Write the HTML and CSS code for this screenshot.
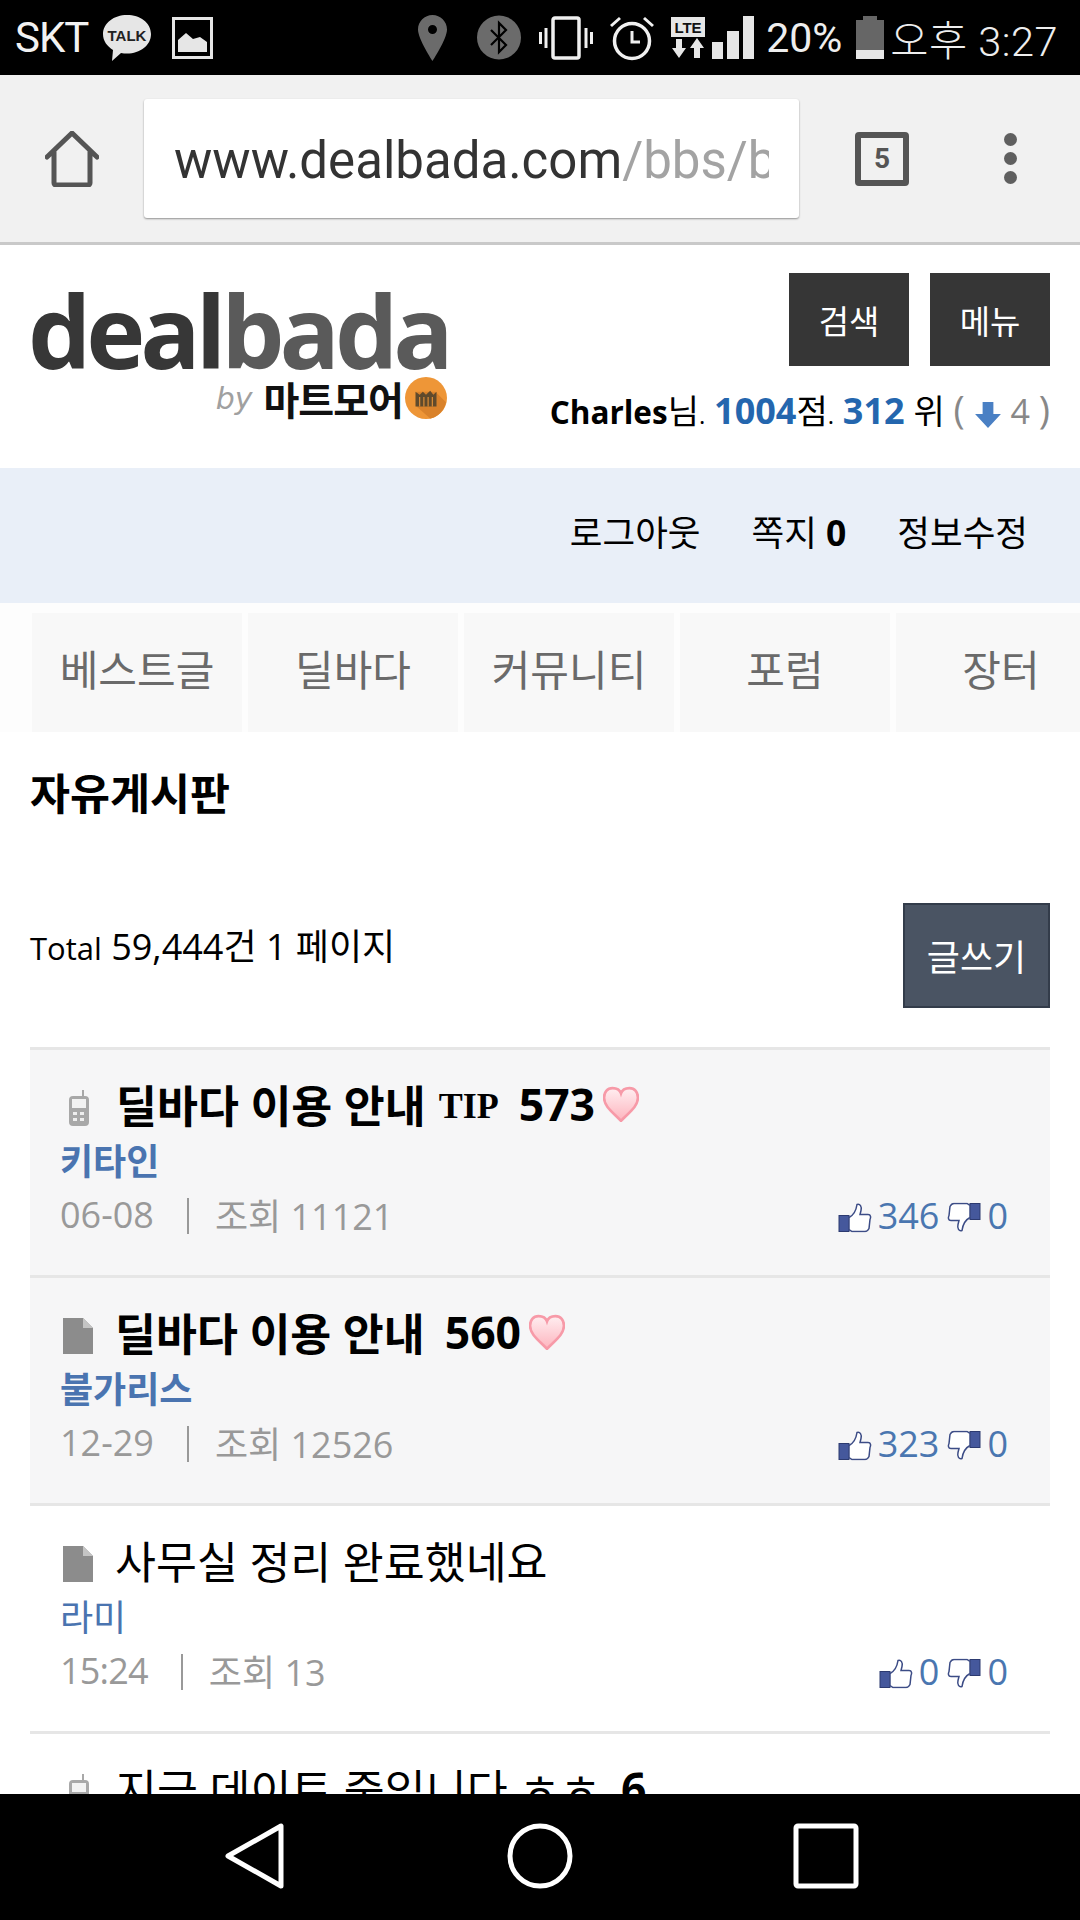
FILE: index.html
```html
<!DOCTYPE html>
<html lang="ko">
<head>
    <meta charset="UTF-8">
    <meta name="viewport" content="width=device-width, initial-scale=1.0">
    <title>dealbada</title>
    <link rel="stylesheet" href="styles.css">
</head>
<body>

    <div id="phone">

        <!-- Android status bar -->
        <div class="statusbar">
            <div class="status-left">
                <span class="carrier">SKT</span>
                <svg class="ic-talk" viewBox="0 0 50 48"><path d="M25 1C12 1 1 9 1 20c0 7 4 12 10 16l-1 11 9-8c2 .4 4 .5 6 .5 13 0 24-8 24-19.500S38 1 25 1z" fill="#e6e6e6"/><text x="25" y="27" text-anchor="middle" class="talk-text">TALK</text></svg>
                <svg class="ic-photo" viewBox="0 0 41 42"><path d="M1.500 1.500h38v39h-38z" fill="none" stroke="#e6e6e6" stroke-width="3"/><path d="M6 35V23l8-7 7 6 7-2 7 5v10z" fill="#e6e6e6"/></svg>
            </div>
            <div class="status-right">
                <svg class="ic-pin" viewBox="0 0 29 46"><path fill-rule="evenodd" d="M14.500 0C6.500 0 0 6.500 0 14.500 0 24 14.500 46 14.500 46S29 24 29 14.500C29 6.500 22.500 0 14.500 0zm0 10a4.500 4.500 0 1 1 0 9 4.500 4.500 0 0 1 0-9z" fill="#6b6b6b"/></svg>
                <svg class="ic-bt" viewBox="0 0 44 45"><circle cx="22" cy="22.500" r="22" fill="#6b6b6b"/><path d="M14 15l15 15-7 7V8l7 7-15 15" fill="none" stroke="#000" stroke-width="2.200"/></svg>
                <svg class="ic-vibrate" viewBox="0 0 54 44"><rect x="14" y="2" width="26" height="40" rx="2" fill="none" stroke="#f0f0f0" stroke-width="3.500"/><path d="M7 12v20M1.500 16v12M47 12v20M52.500 16v12" stroke="#f0f0f0" stroke-width="3"/></svg>
                <svg class="ic-alarm" viewBox="0 0 46 46"><circle cx="23" cy="26" r="17.500" fill="none" stroke="#f0f0f0" stroke-width="3.500"/><path d="M23 16v11h8M2 11l9-8M44 11l-9-8" fill="none" stroke="#f0f0f0" stroke-width="3"/></svg>
                <svg class="ic-lte" viewBox="0 0 34 42"><rect x="0" y="0" width="34" height="20" fill="#e6e6e6"/><text x="17" y="16" text-anchor="middle" class="lte-text">LTE</text><path d="M5 22h6v9h4l-7 10-7-10h4zM23 41h6v-10h4l-7-10-7 10h4z" fill="#e6e6e6"/></svg>
                <div class="signal"><i class="s1"></i><i class="s2"></i><i class="s3"></i></div>
                <span class="battery-pct">20%</span>
                <div class="battery"><i></i></div>
                <span class="clock">오후 3:27</span>
            </div>
        </div>

        <!-- browser toolbar -->
        <div class="toolbar">
            <svg class="ic-home" viewBox="0 0 54 56"><path d="M2 26L27 2l25 24M9 21v31a2 2 0 0 0 2 2h32a2 2 0 0 0 2-2V21" fill="none" stroke="#555" stroke-width="5" stroke-linejoin="round" stroke-linecap="round"/></svg>
            <div class="urlbox"><div class="url">www.dealbada.com<span>/bbs/b</span></div></div>
            <div class="tabcount">5</div>
            <div class="dots"><i></i><i></i><i></i></div>
        </div>

        <div class="page">
            <!-- site header -->
            <div class="site-head">
                <div class="logo">
                    <div class="logo-word">deal<span>bada</span></div>
                    <div class="logo-sub">
                        <span class="by">by</span>
                        <span class="mart">마트모어</span>
                        <svg class="logo-badge" viewBox="0 0 40 40"><circle cx="20" cy="20" r="20" fill="#ee9637"/><path d="M11 14l18 0 10 10A20 20 0 0 1 24 39.600L11 28z" fill="#d9822b"/><path d="M10 28V14l4 3 3-3 3 3 4-4 3 4 3-3v14z" fill="#5f4a2c"/><path d="M14 19v9M18 19v9M22 19v9M26 19v9" stroke="#ee9637" stroke-width="1"/></svg>
                    </div>
                </div>
                <div class="head-right">
                    <div class="head-btns">
                        <div class="btn-dark">검색</div>
                        <div class="btn-dark">메뉴</div>
                    </div>
                    <div class="userline"><b class="name">Charles</b>님<small>.</small> <b class="blue">1004</b>점<small>.</small> <b class="blue">312</b> 위 <span class="gray paren">(</span> <svg class="ic-down" viewBox="0 0 26 26"><path d="M8 1h10v11h7L13 25 1 12h7z" fill="#4a80c4"/></svg> <span class="gray">4</span> <span class="gray paren">)</span></div>
                </div>
            </div>

            <div class="member-bar">
                <span>로그아웃</span>
                <span>쪽지 <b>0</b></span>
                <span>정보수정</span>
            </div>

            <div class="tabs">
                <div class="tab">베스트글</div>
                <div class="tab">딜바다</div>
                <div class="tab">커뮤니티</div>
                <div class="tab">포럼</div>
                <div class="tab">장터</div>
            </div>

            <h1 class="board-title">자유게시판</h1>

            <div class="board-info">
                <span class="total"><small>Total</small> 59,444건 1 페이지</span>
                <div class="btn-write">글쓰기</div>
            </div>

            <div class="post-list">
                <div class="post notice">
                    <div class="post-title">
                        <svg class="ic-mobile" viewBox="0 0 22 38"><use href="#mobile"/></svg>
                        <b>딜바다 이용 안내</b><b class="tip">TIP</b><b class="cnt">573</b>
                        <svg class="ic-heart" viewBox="0 0 34 34"><use href="#heart"/></svg>
                    </div>
                    <div class="post-nick">키타인</div>
                    <div class="post-meta">
                        <div class="meta-left"><span>06-08</span><i class="sep"></i><span>조회 11121</span></div>
                        <div class="votes">
                            <svg class="ic-thumb" viewBox="0 0 34 30"><use href="#thumbup"/></svg><span>346</span>
                            <svg class="ic-thumb" viewBox="0 0 34 30"><use href="#thumbdown"/></svg><span>0</span>
                        </div>
                    </div>
                </div>

                <div class="post notice">
                    <div class="post-title">
                        <svg class="ic-doc" viewBox="0 0 32 38"><use href="#doc"/></svg>
                        <b>딜바다 이용 안내</b><b class="cnt">560</b>
                        <svg class="ic-heart" viewBox="0 0 34 34"><use href="#heart"/></svg>
                    </div>
                    <div class="post-nick">불가리스</div>
                    <div class="post-meta">
                        <div class="meta-left"><span>12-29</span><i class="sep"></i><span>조회 12526</span></div>
                        <div class="votes">
                            <svg class="ic-thumb" viewBox="0 0 34 30"><use href="#thumbup"/></svg><span>323</span>
                            <svg class="ic-thumb" viewBox="0 0 34 30"><use href="#thumbdown"/></svg><span>0</span>
                        </div>
                    </div>
                </div>

                <div class="post">
                    <div class="post-title">
                        <svg class="ic-doc" viewBox="0 0 32 38"><use href="#doc"/></svg>
                        <span>사무실 정리 완료했네요</span>
                    </div>
                    <div class="post-nick plain">라미</div>
                    <div class="post-meta">
                        <div class="meta-left"><span class="time">15:24</span><i class="sep"></i><span>조회 13</span></div>
                        <div class="votes">
                            <svg class="ic-thumb" viewBox="0 0 34 30"><use href="#thumbup"/></svg><span>0</span>
                            <svg class="ic-thumb" viewBox="0 0 34 30"><use href="#thumbdown"/></svg><span>0</span>
                        </div>
                    </div>
                </div>

                <div class="post">
                    <div class="post-title">
                        <svg class="ic-mobile" viewBox="0 0 22 38"><use href="#mobile"/></svg>
                        <span>지금 데이트 중입니다 ㅎㅎ</span><b class="cnt">6</b>
                    </div>
                </div>
            </div>
        </div>

        <!-- android nav buttons -->
        <div class="navbar">
            <svg class="nav-back" viewBox="0 0 60 66"><path d="M56 3v60L3 33z" fill="none" stroke="#fff" stroke-width="5" stroke-linejoin="round"/></svg>
            <svg class="nav-home" viewBox="0 0 66 66"><circle cx="33" cy="33" r="30" fill="none" stroke="#fff" stroke-width="5"/></svg>
            <svg class="nav-recent" viewBox="0 0 66 66"><rect x="3" y="3" width="60" height="60" rx="2" fill="none" stroke="#fff" stroke-width="5"/></svg>
        </div>
    </div>

    <!-- shared icons -->
    <svg class="sprites" width="0" height="0">
        <defs>
            <linearGradient id="heartFill" x1="0" y1="0" x2="0" y2="1"><stop offset="0" stop-color="#ffeef0"/><stop offset="1" stop-color="#fdb4be"/></linearGradient>
            <symbol id="heart" viewBox="0 0 34 34"><path d="M9 2C4 2 1 6 1 11c0 9 10 15 16 22 6-7 16-13 16-22 0-5-3-9-8-9-4 0-7 2-8 5-1-3-4-5-8-5z" fill="url(#heartFill)" stroke="#f79aa8" stroke-width="2.500"/></symbol>
            <symbol id="mobile" viewBox="0 0 22 38"><path d="M15 1v6" stroke="#a8a8a8" stroke-width="2"/><rect x="1" y="7" width="20" height="30" rx="4" fill="#a8a8a8"/><rect x="4" y="10" width="14" height="9" fill="#f2f2f2"/><path d="M5 23h4v3H5zM12 23h4v3h-4zM5 29h4v3H5zM12 29h4v3h-4z" fill="#eee"/></symbol>
            <symbol id="doc" viewBox="0 0 32 38"><path d="M1 1h20l10 10v26H1z" fill="#8c8c8c"/><path d="M21 1l10 10H21z" fill="#c4c4c4"/></symbol>
            <symbol id="thumbup" viewBox="0 0 34 30"><rect x="1" y="13" width="10" height="16" fill="#45589c" stroke="#2c3a70"/><path d="M11 15c4-2 7-6 8-13 3-1 5 2 4 6l-1 4h8c3 0 3 3 2 5l-1 9c-1 2-2 3-4 3H14l-3-2z" fill="#fff" stroke="#3c4c86" stroke-width="1.500"/></symbol>
            <symbol id="thumbdown" viewBox="0 0 34 30"><rect x="23" y="1" width="10" height="16" fill="#45589c" stroke="#2c3a70"/><path d="M23 15c-4 2-7 6-8 13-3 1-5-2-4-6l1-4H4c-3 0-3-3-2-5l1-9c1-2 2-3 4-3h13l3 2z" fill="#fff" stroke="#3c4c86" stroke-width="1.500"/></symbol>
        </defs>
    </svg>

</body>
</html>
```

FILE: styles.css
```css
/* General */
html, body {
    margin: 0;
    padding: 0;
    background: #fff;
}

body {
    font-family: "Open Sans", "Noto Sans CJK KR", sans-serif;
    color: #000;
}

#phone {
    width: 1080px;
    height: 1920px;
    display: flex;
    flex-direction: column;
    overflow: hidden;
}

.sprites {
    position: absolute;
}

/* Status bar */
.statusbar {
    height: 75px;
    flex: none;
    background: #000;
    color: #eee;
    display: flex;
    justify-content: space-between;
    align-items: center;
    padding: 0 22px 0 15px;
    box-sizing: border-box;
    font-family: Roboto, "Noto Sans CJK KR", sans-serif;
    font-size: 41px;
}

.status-left, .status-right {
    display: flex;
    align-items: center;
}

.carrier {
    margin-right: 14px;
    color: #f2f2f2;
    font-size: 42px;
    letter-spacing: -1px;
}

.ic-talk {
    width: 50px;
    height: 48px;
    margin-right: 20px;
}

.talk-text {
    font-family: "Liberation Sans", sans-serif;
    font-size: 15px;
    font-weight: 700;
    fill: #222;
}

.ic-photo {
    width: 41px;
    height: 42px;
}

.ic-pin {
    width: 29px;
    height: 46px;
    margin-right: 30px;
}

.ic-bt {
    width: 44px;
    height: 45px;
    margin-right: 18px;
}

.ic-vibrate {
    width: 54px;
    height: 44px;
    margin-right: 16px;
}

.ic-alarm {
    width: 46px;
    height: 46px;
    margin-right: 16px;
}

.ic-lte {
    width: 34px;
    height: 42px;
    margin-right: 7px;
}

.lte-text {
    font-family: "Liberation Sans", sans-serif;
    font-size: 15px;
    font-weight: 700;
    fill: #111;
}

.signal {
    display: flex;
    align-items: flex-end;
    gap: 4px;
    height: 43px;
    margin-right: 12px;
}

.signal i {
    width: 11.500px;
    background: #e6e6e6;
    display: block;
}

.s1 { height: 17px; }
.s2 { height: 28px; }
.s3 { height: 43px; }

.battery-pct {
    margin-right: 14px;
}

.battery {
    width: 28px;
    height: 39px;
    margin: 4px 6px 0 0;
    background: #666;
    position: relative;
}

.battery::before {
    content: "";
    position: absolute;
    left: 7px;
    right: 7px;
    top: -4px;
    height: 4px;
    background: #666;
}

.battery i {
    display: block;
    position: absolute;
    left: 0;
    right: 0;
    bottom: 0;
    height: 9px;
    background: #e6e6e6;
}

.clock {
    font-weight: 300;
    font-size: 41.500px;
    letter-spacing: 0.500px;
}

/* Browser toolbar */
.toolbar {
    height: 170px;
    flex: none;
    box-sizing: border-box;
    background: #f1f1f1;
    border-bottom: 3px solid #c9c9c9;
    display: flex;
    align-items: center;
    padding: 0 0 0 45px;
}

.ic-home {
    width: 54px;
    height: 56px;
    margin-right: 45px;
}

.urlbox {
    width: 655px;
    height: 119px;
    box-sizing: border-box;
    background: #fff;
    border-radius: 3px;
    box-shadow: 0 1px 2px rgba(0, 0, 0, 0.4);
    padding: 0 30px;
    display: flex;
    align-items: center;
    margin-right: 56px;
}

.url {
    width: 595px;
    overflow: hidden;
    white-space: nowrap;
    font-family: Roboto, sans-serif;
    font-size: 51px;
    color: #333;
    padding-top: 3px;
}

.url span {
    color: #a3a3a3;
}

.tabcount {
    width: 54px;
    height: 54px;
    box-sizing: border-box;
    border: 6px solid #555;
    border-radius: 4px;
    font-family: Roboto, sans-serif;
    font-weight: 700;
    font-size: 28px;
    color: #555;
    text-align: center;
    line-height: 42px;
    margin-right: 95px;
}

.dots {
    display: flex;
    flex-direction: column;
    gap: 6px;
}

.dots i {
    display: block;
    width: 13px;
    height: 13px;
    border-radius: 50%;
    background: #5f5f5f;
}

/* Page */
.page {
    flex: 1;
    min-height: 0;
    overflow: hidden;
    background: #fff;
}

/* Site header */
.site-head {
    height: 223px;
    box-sizing: border-box;
    padding: 28px 30px 0;
    display: flex;
    justify-content: space-between;
}

.logo {
    width: 417px;
    padding-top: 8px;
    flex: none;
}

.logo-word {
    margin-left: -2px;
    font-size: 100px;
    font-weight: 700;
    line-height: 98px;
    letter-spacing: -5px;
    color: #373737;
    white-space: nowrap;
}

.logo-word span {
    color: #5a5a5a;
}

.logo-sub {
    display: flex;
    justify-content: flex-end;
    align-items: center;
    height: 44px;
    margin-top: -3px;
}

.by {
    font-family: "DejaVu Sans", sans-serif;
    font-size: 30px;
    font-style: italic;
    color: #a0a0a0;
    margin-right: 11px;
}

.mart {
    font-family: "Noto Sans CJK KR", sans-serif;
    font-size: 39px;
    line-height: 44px;
    font-weight: 700;
    color: #111;
    letter-spacing: -1px;
}

.logo-badge {
    width: 42px;
    height: 42px;
    margin-left: 2px;
}

.head-right {
    display: flex;
    flex-direction: column;
    align-items: flex-end;
}

.head-btns {
    display: flex;
    gap: 21px;
}

.btn-dark {
    width: 120px;
    height: 93px;
    background: #363636;
    color: #fff;
    font-size: 33px;
    display: flex;
    align-items: center;
    justify-content: center;
}

.userline {
    margin-top: 21px;
    font-size: 34px;
    line-height: 44px;
    white-space: nowrap;
}

.userline small {
    font-size: 24px;
}

.name {
    font-size: 31.500px;
}

.blue {
    color: #2466ae;
    font-size: 36px;
}

.gray {
    color: #888;
}

.paren {
    font-size: 38px;
}

.ic-down {
    width: 28px;
    height: 28px;
    vertical-align: -5px;
}

/* Member bar */
.member-bar {
    height: 135px;
    box-sizing: border-box;
    background: #e9eff8;
    display: flex;
    justify-content: flex-end;
    align-items: center;
    gap: 51px;
    padding: 0 52px 10px 0;
    font-size: 35.500px;
}

/* Tabs */
.tabs {
    height: 129px;
    box-sizing: border-box;
    padding: 10px 0 0 32px;
    background: #fdfdfd;
    display: grid;
    grid-template-columns: repeat(5, 210px);
    column-gap: 6px;
}

.tab {
    background: #f8f8f8;
    color: #6a6a6a;
    font-size: 42px;
    padding-bottom: 10px;
    display: flex;
    align-items: center;
    justify-content: center;
}

/* Board head */
.board-title {
    margin: 0;
    padding: 30px 30px 0;
    font-size: 43.500px;
    font-weight: 700;
    line-height: 64px;
}

.board-info {
    margin-top: 77px;
    padding: 0 30px;
    height: 105px;
    display: flex;
    justify-content: space-between;
    align-items: center;
    font-size: 36px;
}

.total {
    margin-bottom: 22px;
}

.total small {
    font-size: 31px;
}

.btn-write {
    width: 147px;
    height: 105px;
    box-sizing: border-box;
    background: #4a5463;
    border: 2px solid #333c4a;
    color: #fff;
    font-size: 36px;
    display: flex;
    align-items: center;
    justify-content: center;
}

/* Post list */
.post-list {
    margin: 39px 30px 0;
}

.post {
    height: 228px;
    box-sizing: border-box;
    border-top: 3px solid #e6e6e6;
    padding: 21px 30px 0;
}

.post.notice {
    background: #f6f6f7;
}

.post-title {
    height: 65px;
    display: flex;
    align-items: center;
    font-size: 44.500px;
    white-space: nowrap;
}

.post-title b {
    font-weight: 700;
}

.tip {
    font-family: "Liberation Serif", serif;
    font-size: 36px;
    margin-left: 13px;
    padding-top: 4px;
}

.cnt {
    margin-left: 20px;
}

.ic-mobile {
    width: 22px;
    height: 38px;
    margin: 8px 26px 0 8px;
    flex: none;
}

.ic-doc {
    width: 32px;
    height: 38px;
    margin: 8px 21px 0 2px;
    flex: none;
}

.ic-heart {
    width: 36px;
    height: 36px;
    margin-left: 8px;
    flex: none;
}

.post-nick {
    font-size: 36px;
    font-weight: 700;
    line-height: 52px;
    color: #4a74b0;
}

.post-nick.plain {
    font-weight: 400;
}

.post-meta {
    height: 56px;
    margin-top: -2px;
    display: flex;
    justify-content: space-between;
    align-items: center;
    padding-right: 12px;
    font-size: 36px;
    color: #999;
}

.meta-left {
    display: flex;
    align-items: center;
}

.time {
    letter-spacing: -0.800px;
}

.sep {
    display: block;
    width: 2px;
    height: 36px;
    background: #999;
    margin: 4px 26px 0 33px;
}

.votes {
    display: flex;
    align-items: center;
    color: #4a76b0;
    gap: 6px;
    margin-top: 2px;
}

.ic-thumb {
    width: 34px;
    height: 31px;
    margin-top: 5px;
}

.votes span + .ic-thumb {
    margin-left: 2px;
}

/* Android nav */
.navbar {
    height: 126px;
    flex: none;
    background: #000;
    display: flex;
    align-items: center;
    padding: 0 0 2px 225px;
    box-sizing: border-box;
}

.nav-back {
    width: 60px;
    height: 66px;
}

.nav-home {
    width: 66px;
    height: 66px;
    margin-left: 222px;
}

.nav-recent {
    width: 66px;
    height: 66px;
    margin-left: 220px;
}
```
